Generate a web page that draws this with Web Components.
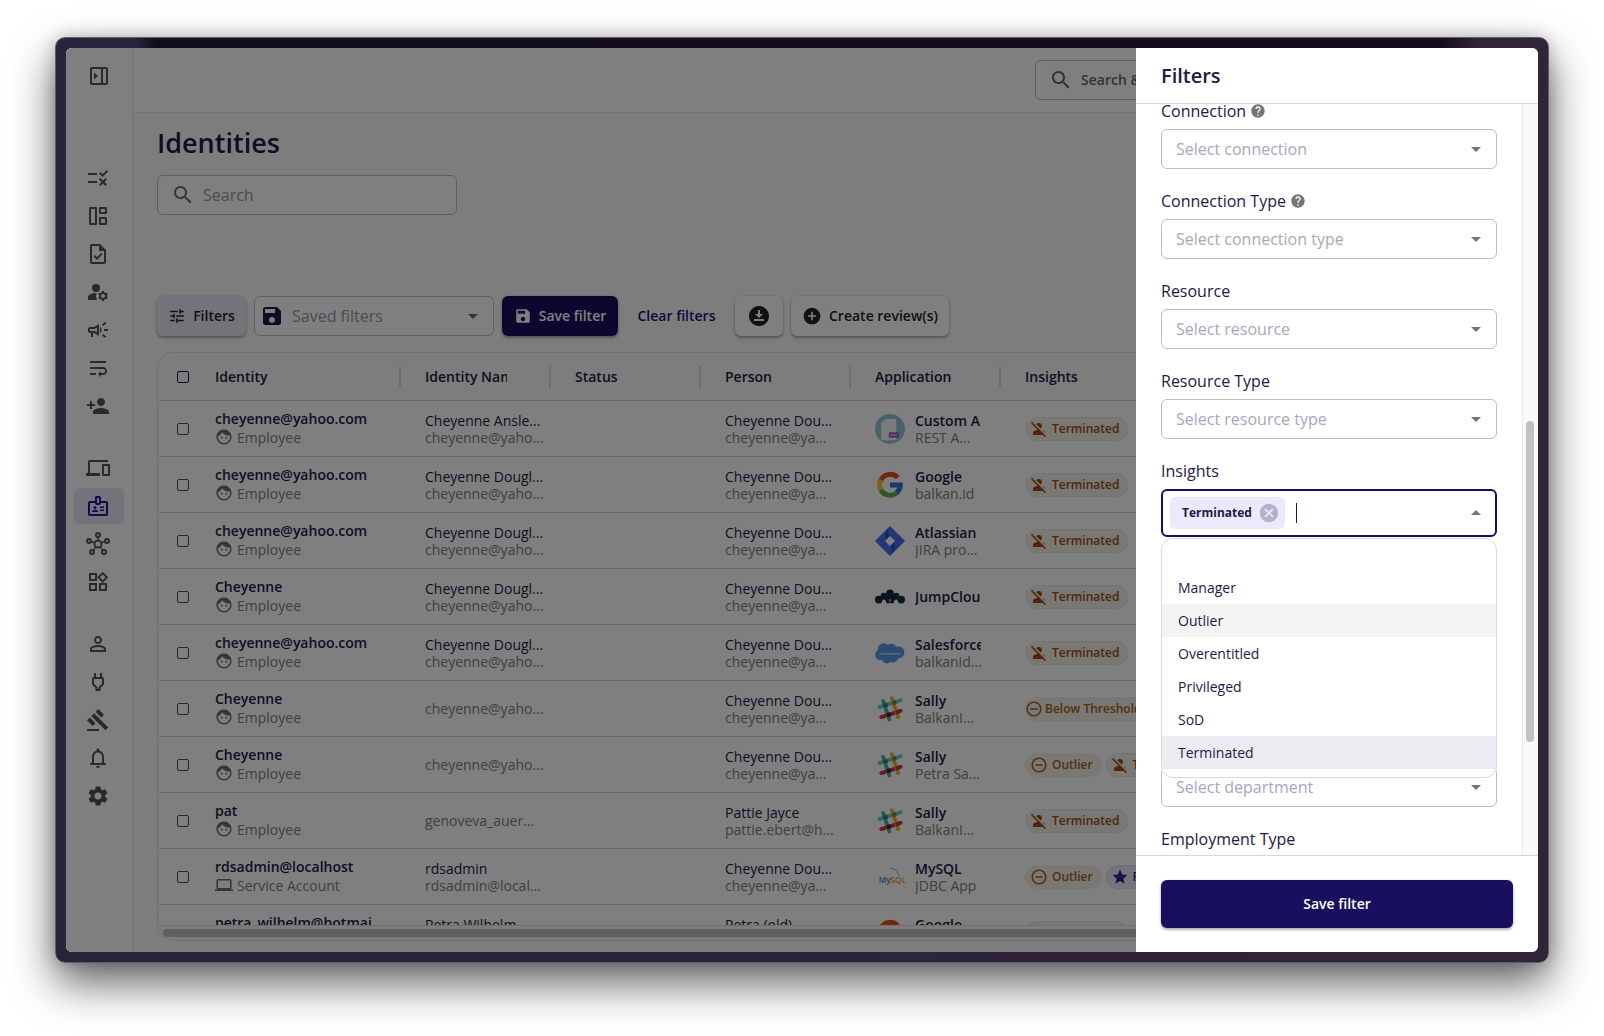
<!DOCTYPE html>
<html lang="en">
    <head>
        <meta charset="UTF-8" />
        <meta name="viewport" content="width=device-width, initial-scale=1.0" />
        <title>Identities</title>
        <style>
            :root {
                --ink: #241846;
                --primary: #190f5f;
                --muted: #808080;
                --line: #d6d6d6;
                --field-line: #bdbdbd;
                --font: "Open Sans", "Noto Sans", sans-serif;
            }

            body {
                margin: 0;
                background: #fff;
                color: var(--ink);
                font: 14px/20px var(--font);
            }
        </style>
    </head>
    <body>
        <app-window>
            <side-nav slot="nav"></side-nav>
            <global-search slot="header">Search &amp;</global-search>
            <identities-page></identities-page>
            <filter-drawer slot="drawer" heading="Filters">
                <filter-field label="Connection" placeholder="Select connection" help></filter-field>
                <filter-field label="Connection Type" placeholder="Select connection type" help></filter-field>
                <filter-field label="Resource" placeholder="Select resource"></filter-field>
                <filter-field label="Resource Type" placeholder="Select resource type"></filter-field>
                <tag-field label="Insights" value="Terminated" active="Outlier"></tag-field>
                <filter-field></filter-field>
                <filter-field></filter-field>
                <filter-field placeholder="Select department"></filter-field>
                <filter-field label="Employment Type" placeholder="Select employment type"></filter-field>
            </filter-drawer>
        </app-window>

        <script>
            const icons = {
                panel: '<path d="M19 3H5c-1.1 0-2 .9-2 2v14c0 1.1.9 2 2 2h14c1.1 0 2-.9 2-2V5c0-1.1-.9-2-2-2zM5 19V5h9v14H5zm14 0h-3V5h3v14zM7 8.5v7l4-3.5z"/>',
                rule: '<path d="M16.54 11L13 7.46l1.41-1.41 2.12 2.12 4.24-4.24 1.41 1.41L16.54 11zM11 7H2v2h9V7zm10 6.41L19.59 12 17 14.59 14.41 12 13 13.41 15.59 16 13 18.59 14.41 20 17 17.41 19.59 20 21 18.59 18.41 16 21 13.41zM11 15H2v2h9v-2z"/>',
                dashboard: '<g fill="none" stroke="currentColor" stroke-width="2" stroke-linejoin="round"><path d="M4 4h6v16H4z"/><path d="M14 4h6v5h-6zM14 14h6v6h-6z"/></g>',
                task: '<path d="M14 2H6c-1.1 0-2 .9-2 2v16c0 1.1.9 2 2 2h12c1.1 0 2-.9 2-2V8l-6-6zm4 18H6V4h7v5h5v11z"/><path d="M8.82 13.05L7.4 14.46 10.94 18l5.66-5.66-1.41-1.41-4.24 4.24z"/><path d="M13 3v6h6z"/>',
                manage: '<circle cx="10" cy="8" r="4"/><path d="M10.67 13.02c-.22-.01-.44-.02-.67-.02-2.42 0-4.68.67-6.61 1.82-.88.52-1.39 1.5-1.39 2.53V20h9.26c-.79-1.13-1.26-2.51-1.26-4 0-1.07.25-2.07.67-2.98zM20.75 16c0-.22-.03-.42-.06-.63l1.14-1.01-1-1.73-1.45.49c-.32-.27-.68-.48-1.08-.63L18 11h-2l-.3 1.49c-.4.15-.76.36-1.08.63l-1.45-.49-1 1.73 1.14 1.01c-.03.21-.06.41-.06.63s.03.42.06.63l-1.14 1.01 1 1.73 1.45-.49c.32.27.68.48 1.08.63L16 21h2l.3-1.49c.4-.15.76-.36 1.08-.63l1.45.49 1-1.73-1.14-1.01c.03-.21.06-.41.06-.63zM17 18c-1.1 0-2-.9-2-2s.9-2 2-2 2 .9 2 2-.9 2-2 2z"/>',
                campaign: '<path d="M18 11v2h4v-2h-4zM16 17.61c.96.71 2.21 1.65 3.2 2.39.4-.53.8-1.07 1.2-1.6-.99-.74-2.24-1.68-3.2-2.4-.4.54-.8 1.08-1.2 1.61zM20.4 5.6c-.4-.53-.8-1.07-1.2-1.6-.99.74-2.24 1.68-3.2 2.4.4.53.8 1.07 1.2 1.6.96-.72 2.21-1.65 3.2-2.4zM4 9c-1.1 0-2 .9-2 2v2c0 1.1.9 2 2 2h1v4h2v-4h1l5 3V6L8 9H4zm5.03 1.71L11 9.53v4.94l-1.97-1.18-.48-.29H4v-2h4.55l.48-.29zM15.5 12c0-1.33-.58-2.53-1.5-3.35v6.69c.92-.81 1.5-2.01 1.5-3.34z"/>',
                wrap: '<path d="M4 19h6v-2H4v2zM20 5H4v2h16V5zm-3 6H4v2h13.25c1.1 0 2 .9 2 2s-.9 2-2 2H15v-2l-3 3 3 3v-2h2c2.21 0 4-1.79 4-4s-1.79-4-4-4z"/>',
                personAdd: '<path d="M15 12c2.21 0 4-1.79 4-4s-1.79-4-4-4-4 1.79-4 4 1.79 4 4 4zm-9-2V7H4v3H1v2h3v3h2v-3h3v-2H6zm9 4c-2.67 0-8 1.34-8 4v2h16v-2c0-2.66-5.33-4-8-4z"/>',
                devices: '<path d="M4 6h18V4H4c-1.1 0-2 .9-2 2v11H0v3h14v-3H4V6zm19 2h-6c-.55 0-1 .45-1 1v10c0 .55.45 1 1 1h6c.55 0 1-.45 1-1V9c0-.55-.45-1-1-1zm-1 10h-4v-8h4v8z"/>',
                badge: '<path d="M20 7h-5V4c0-1.1-.9-2-2-2h-2c-1.1 0-2 .9-2 2v3H4c-1.1 0-2 .9-2 2v11c0 1.1.9 2 2 2h16c1.1 0 2-.9 2-2V9c0-1.1-.9-2-2-2zm-9-3h2v5h-2V4zm9 16H4V9h5c0 1.1.9 2 2 2h2c1.1 0 2-.9 2-2h5v11z"/><circle cx="9" cy="13.5" r="1.5"/><path d="M6 18v-.5c0-1 1.5-1.7 3-1.7s3 .7 3 1.7v.5zM14 12.5h4V14h-4zM14 15.5h4V17h-4z"/>',
                hub: '<g fill="none" stroke="currentColor" stroke-width="2"><circle cx="12" cy="12" r="3.5"/><circle cx="12" cy="3" r="2"/><circle cx="3" cy="9" r="2"/><circle cx="21" cy="9" r="2"/><circle cx="6" cy="20" r="2"/><circle cx="18" cy="20" r="2"/><path d="M12 5v3.5M5 9.5l3.7 1.2M19 9.5l-3.7 1.2M7.2 18.3l2.6-3.5M16.8 18.3l-2.6-3.5" stroke-width="1.4"/></g>',
                widgets: '<path d="M16.66 4.52l2.83 2.83-2.83 2.83-2.83-2.83 2.83-2.83M9 5v4H5V5h4m10 10v4h-4v-4h4M9 15v4H5v-4h4m7.66-13.31L11 7.34 16.66 13l5.66-5.66-5.66-5.65zM11 3H3v8h8V3zm10 10h-8v8h8v-8zm-10 0H3v8h8v-8z"/>',
                person: '<path d="M12 5.9c1.16 0 2.1.94 2.1 2.1s-.94 2.1-2.1 2.1S9.9 9.16 9.9 8s.94-2.1 2.1-2.1m0 9c2.97 0 6.1 1.46 6.1 2.1v1.1H5.9V17c0-.64 3.13-2.1 6.1-2.1M12 4C9.79 4 8 5.79 8 8s1.79 4 4 4 4-1.79 4-4-1.79-4-4-4zm0 9c-2.67 0-8 1.34-8 4v3h16v-3c0-2.66-5.33-4-8-4z"/>',
                power: '<path d="M16 9v4.66l-3.5 3.51V19h-1v-1.83L8 13.65V9h8m0-6h-2v4h-4V3H8v4c-1.1 0-2 .9-2 2v5.5L9.5 18v3h5v-3l3.5-3.51V9c0-1.1-.9-2-2-2V3z"/>',
                gavel: '<path d="M1 21h12v2H1v-2zM5.24 8.07l2.83-2.83 14.14 14.14-2.83 2.83L5.24 8.07zM12.32 1l5.66 5.66-2.83 2.83-5.66-5.66L12.32 1zM3.82 9.48l5.66 5.66-2.83 2.83-5.66-5.66 2.83-2.83z"/>',
                bell: '<path d="M12 22c1.1 0 2-.9 2-2h-4c0 1.1.9 2 2 2zm6-6v-5c0-3.07-1.63-5.64-4.5-6.32V4c0-.83-.67-1.5-1.5-1.5s-1.5.67-1.5 1.5v.68C7.64 5.36 6 7.92 6 11v5l-2 2v1h16v-1l-2-2zm-2 1H8v-6c0-2.48 1.51-4.5 4-4.5s4 2.02 4 4.5v6z"/>',
                settings: '<path d="M19.14 12.94c.04-.3.06-.61.06-.94 0-.32-.02-.64-.07-.94l2.03-1.58c.18-.14.23-.41.12-.61l-1.92-3.32c-.12-.22-.37-.29-.59-.22l-2.39.96c-.5-.38-1.03-.7-1.62-.94l-.36-2.54c-.04-.24-.24-.41-.48-.41h-3.84c-.24 0-.43.17-.47.41l-.36 2.54c-.59.24-1.13.57-1.62.94l-2.39-.96c-.22-.08-.47 0-.59.22L2.74 8.87c-.12.21-.08.47.12.61l2.03 1.58c-.05.3-.09.63-.09.94s.02.64.07.94l-2.03 1.58c-.18.14-.23.41-.12.61l1.92 3.32c.12.22.37.29.59.22l2.39-.96c.5.38 1.03.7 1.62.94l.36 2.54c.05.24.24.41.48.41h3.84c.24 0 .44-.17.47-.41l.36-2.54c.59-.24 1.13-.56 1.62-.94l2.39.96c.22.08.47 0 .59-.22l1.92-3.32c.12-.22.07-.47-.12-.61l-2.01-1.58zM12 15.6c-1.98 0-3.6-1.62-3.6-3.6s1.62-3.6 3.6-3.6 3.6 1.62 3.6 3.6-1.62 3.6-3.6 3.6z"/>',
                search: '<path d="M15.5 14h-.79l-.28-.27C15.41 12.59 16 11.11 16 9.5 16 5.91 13.09 3 9.5 3S3 5.91 3 9.5 5.91 16 9.5 16c1.61 0 3.09-.59 4.23-1.57l.27.28v.79l5 4.99L20.49 19l-4.99-5zm-6 0C7.01 14 5 11.99 5 9.5S7.01 5 9.5 5 14 7.01 14 9.5 11.99 14 9.5 14z"/>',
                tune: '<path d="M3 17v2h6v-2H3zM3 5v2h10V5H3zm10 16v-2h8v-2h-8v-2h-2v6h2zM7 9v2H3v2h4v2h2V9H7zm14 4v-2H11v2h10zm-6-4h2V7h4V5h-4V3h-2v6z"/>',
                save: '<path d="M17 3H5c-1.11 0-2 .9-2 2v14c0 1.1.89 2 2 2h14c1.1 0 2-.9 2-2V7l-4-4zm-5 16c-1.66 0-3-1.34-3-3s1.34-3 3-3 3 1.34 3 3-1.34 3-3 3zm3-10H5V5h10v4z"/>',
                download: '<path d="M12 2C6.49 2 2 6.49 2 12s4.49 10 10 10 10-4.49 10-10S17.51 2 12 2zm-1 8V6h2v4h3l-4 4-4-4h3zm6 7H7v-2h10v2z"/>',
                add: '<path d="M12 2C6.48 2 2 6.48 2 12s4.48 10 10 10 10-4.48 10-10S17.52 2 12 2zm5 11h-4v4h-2v-4H7v-2h4V7h2v4h4v2z"/>',
                face: '<path d="M9 11.75c-.69 0-1.25.56-1.25 1.25s.56 1.25 1.25 1.25 1.25-.56 1.25-1.25-.56-1.25-1.25-1.25zm6 0c-.69 0-1.25.56-1.25 1.25s.56 1.25 1.25 1.25 1.25-.56 1.25-1.25-.56-1.25-1.25-1.25zM12 2C6.48 2 2 6.48 2 12s4.48 10 10 10 10-4.48 10-10S17.52 2 12 2zm0 18c-4.41 0-8-3.59-8-8 0-.29.02-.58.05-.86 2.36-1.05 4.23-2.98 5.21-5.37C11.07 8.33 14.05 10 17.42 10c.78 0 1.53-.09 2.25-.26.21.71.33 1.47.33 2.26 0 4.41-3.59 8-8 8z"/>',
                laptop: '<path d="M20 18c1.1 0 2-.9 2-2V6c0-1.1-.9-2-2-2H4c-1.1 0-2 .9-2 2v10c0 1.1.9 2 2 2H0v2h24v-2h-4zM4 6h16v10H4V6z"/>',
                personOff: '<path d="M8.65 5.82C9.36 4.72 10.6 4 12 4c2.21 0 4 1.79 4 4 0 1.4-.72 2.64-1.82 3.35L8.65 5.82zM20 17.17c-.02-1.1-.63-2.11-1.61-2.62-.54-.28-1.13-.54-1.77-.76L20 17.17zm1.19 4.02L2.81 2.81 1.39 4.22l8.89 8.89c-1.81.23-3.39.79-4.67 1.45-1 .51-1.61 1.54-1.61 2.66V20h13.17l2.61 2.61 1.41-1.42z"/>',
                minus: '<path d="M7 11v2h10v-2H7zm5-9C6.48 2 2 6.48 2 12s4.48 10 10 10 10-4.48 10-10S17.52 2 12 2zm0 18c-4.41 0-8-3.59-8-8s3.59-8 8-8 8 3.59 8 8-3.59 8-8 8z"/>',
                star: '<path d="M12 17.27L18.18 21l-1.64-7.03L22 9.24l-7.19-.61L12 2 9.19 8.63 2 9.24l5.46 4.73L5.82 21z"/>',
                help: '<path d="M12 2C6.48 2 2 6.48 2 12s4.48 10 10 10 10-4.48 10-10S17.52 2 12 2zm1 17h-2v-2h2v2zm2.07-7.75l-.9.92C13.45 12.9 13 13.5 13 15h-2v-.5c0-1.1.45-2.1 1.17-2.83l1.24-1.26c.37-.36.59-.86.59-1.41 0-1.1-.9-2-2-2s-2 .9-2 2H8c0-2.21 1.79-4 4-4s4 1.79 4 4c0 .88-.36 1.68-.93 2.25z"/>',
                cancel: '<path d="M12 2C6.47 2 2 6.47 2 12s4.47 10 10 10 10-4.47 10-10S17.53 2 12 2zm5 13.59L15.59 17 12 13.41 8.41 17 7 15.59 10.59 12 7 8.41 8.41 7 12 10.59 15.59 7 17 8.41 13.41 12 17 15.59z"/>',
                down: '<path d="M7 10l5 5 5-5z"/>',
                up: '<path d="M7 14l5-5 5 5z"/>',

                // application logos
                custom: '<circle cx="12" cy="12" r="12" fill="#8fc4d2"/><path d="M8 4h9v17H5V7z" fill="#f7f7f7"/><path d="M8 4v3H5z" fill="#cfdfe4"/><rect x="11" y="14.5" width="8" height="4.5" rx=".5" fill="#a35dc0"/><path d="M12.5 16.8h5" stroke="#e0c6ea" stroke-width="1"/>',
                google: '<g fill="none" stroke-width="4"><path d="M18.2 6.1A8.3 8.3 0 0 0 4.7 8" stroke="#ea4d1f"/><path d="M4.7 8a8.3 8.3 0 0 0 0 8" stroke="#f2c230"/><path d="M4.7 16a8.3 8.3 0 0 0 12.6 2.3" stroke="#5fae45"/><path d="M17.3 18.3A8.3 8.3 0 0 0 20.2 12H12" stroke="#3d6fe0"/></g>',
                atlassian: '<path d="M12 0l12 12-12 12L0 12z" fill="#4a6cf0"/><path d="M12 1c-3 3-2 5 0 7l-3 3c-2-4-1-7 3-10zM12 23c3-3 2-5 0-7l3-3c2 4 1 7-3 10z" fill="#2c46c0"/><path d="M12 8l4 4-4 4-4-4z" fill="#fff"/>',
                jumpcloud: '<g fill="#14293d"><circle cx="12" cy="9" r="3"/><circle cx="7" cy="11" r="2.5"/><circle cx="17" cy="11" r="2.5"/><circle cx="3" cy="14" r="3"/><circle cx="21" cy="14" r="3"/><path d="M1 17c1-4 3-5 6-5s5 2 5 5c0-3 2-5 5-5s5 1 6 5h-4c0-2-1-3-2-3s-2 1-2 3H9c0-2-1-3-2-3s-2 1-2 3z"/><path d="M8 10h8v4h-8z"/></g>',
                salesforce: '<g fill="#5a96e0"><circle cx="7" cy="9" r="4.8"/><circle cx="13" cy="8.5" r="4"/><circle cx="18.5" cy="11.5" r="5"/><circle cx="4.5" cy="13.5" r="4.3"/><circle cx="9.5" cy="16" r="4.3"/><circle cx="14.5" cy="15.500" r="4"/></g><path d="M3.5 12.5h17" stroke="#dce8f8" stroke-width="1.2" stroke-dasharray="1.5 .5"/>',
                slack: '<g stroke-width="3" stroke-linecap="round"><path d="M3.500 10.500l17-5.500" stroke="#6fc7e0"/><path d="M5 18.500l15.500-5" stroke="#d8285c"/><path d="M6.500 5.500l5 15" stroke="#48b48c"/><path d="M13.500 3.500l5 15" stroke="#e8b22c"/></g><path d="M6.500 8l3-1 1 3-3 1z" fill="#2f7f74"/><path d="M13.500 5.800l3-1 1 3-3 1z" fill="#5d8f3a"/><path d="M9 15.500l3-1 1 3-3 1z" fill="#27242f"/><path d="M16 13.300l3-1 1 3-3 1z" fill="#b8421c"/>',
                mysql: '<text x="3" y="17" font-family="Open Sans" font-size="6.5" font-weight="600" fill="#4f7ea0">My<tspan fill="#e8962c">SQL</tspan></text><path d="M12.5 5c3 0 5 2 5.500 4l1.500 2" fill="none" stroke="#7fa4bd" stroke-width=".7"/>',
            };

            // Every element below renders one static string into an open root.
            class BaseElement extends HTMLElement {
                connectedCallback() {
                    const shadow = this.attachShadow({ mode: "open" });
                    shadow.innerHTML = `<style>* { box-sizing: border-box; }</style>${this.render()}`;
                }
            }

            class UiIcon extends BaseElement {
                render() {
                    const size = this.getAttribute("size") || 24;
                    return `
                        <style>
                            :host { display: inline-flex; flex: none; }
                            svg { display: block; fill: currentColor; }
                        </style>
                        <svg width="${size}" height="${size}" viewBox="0 0 24 24" aria-hidden="true">${icons[this.getAttribute("name")]}</svg>`;
                }
            }

            class AppWindow extends BaseElement {
                render() {
                    return `
                        <style>
                            :host {
                                display: flex;
                                box-sizing: border-box;
                                height: 100vh;
                                padding: 37px 55px 73px;
                            }
                            .frame {
                                flex: 1;
                                display: flex;
                                min-width: 0;
                                padding: 10px;
                                border: 1px solid #605d6b;
                                border-radius: 10px;
                                background:
                                    linear-gradient(90deg, transparent 80px, #110c20 100px, #140c1c calc(100% - 110px), transparent calc(100% - 70px)) top / 100% 10px no-repeat,
                                    linear-gradient(90deg, #28253a, #302438);
                                box-shadow: 0 20px 44px rgba(0, 0, 0, 0.62), 0 0 16px rgba(0, 0, 0, 0.2);
                            }
                            .screen {
                                position: relative;
                                flex: 1;
                                display: flex;
                                min-width: 0;
                                overflow: hidden;
                                border-radius: 6px;
                                background: #fafafa;
                            }
                            .column {
                                flex: 1;
                                display: flex;
                                flex-direction: column;
                                min-width: 0;
                            }
                            header {
                                display: flex;
                                justify-content: flex-end;
                                padding: 12px 24px;
                                border-bottom: 1px solid #e6e6e6;
                                background: #fff;
                            }
                            .backdrop {
                                position: absolute;
                                inset: 0;
                                background: rgba(0, 0, 0, 0.5);
                            }
                        </style>
                        <div class="frame">
                            <div class="screen">
                                <slot name="nav"></slot>
                                <div class="column">
                                    <header><slot name="header"></slot></header>
                                    <slot></slot>
                                </div>
                                <div class="backdrop"></div>
                                <slot name="drawer"></slot>
                            </div>
                        </div>`;
                }
            }

            class SideNav extends BaseElement {
                render() {
                    const groups = [
                        ["rule", "dashboard", "task", "manage", "campaign", "wrap", "personAdd"],
                        ["devices", "badge", "hub", "widgets"],
                        ["person", "power", "gavel", "bell", "settings"],
                    ];
                    const link = (name) =>
                        `<a href="#${name}" aria-label="${name}" ${name === "badge" ? 'class="active"' : ""}><ui-icon name="${name}"></ui-icon></a>`;
                    return `
                        <style>
                            :host {
                                display: flex;
                                flex-direction: column;
                                flex: none;
                                width: 67px;
                                box-sizing: border-box;
                                padding: 16px 8px;
                                border-right: 1px solid #e6e6e6;
                                background: #fff;
                                color: #55535c;
                            }
                            button {
                                display: flex;
                                justify-content: center;
                                margin: 0 0 72px;
                                padding: 0;
                                border: 0;
                                background: none;
                                color: inherit;
                            }
                            nav { display: flex; flex-direction: column; gap: 26px; }
                            div { display: flex; flex-direction: column; gap: 2px; }
                            a {
                                display: flex;
                                align-items: center;
                                height: 36px;
                                padding: 0 12px;
                                border-radius: 5px;
                                color: inherit;
                            }
                            .active { background: #e8e6f4; color: #2210a0; }
                        </style>
                        <button type="button" aria-label="Expand menu"><ui-icon name="panel"></ui-icon></button>
                        <nav>${groups.map((group) => `<div>${group.map(link).join("")}</div>`).join("")}</nav>`;
                }
            }

            class GlobalSearch extends BaseElement {
                render() {
                    return `
                        <style>
                            :host { display: flex; flex: 0 1 479px; }
                            button {
                                flex: 1;
                                display: flex;
                                align-items: center;
                                gap: 8px;
                                height: 40px;
                                padding: 0 13px;
                                border: 1px solid var(--field-line);
                                border-radius: 6px;
                                background: #fff;
                                color: #666370;
                                font: 600 14px/20px var(--font);
                            }
                        </style>
                        <button type="button"><ui-icon name="search"></ui-icon><slot></slot></button>`;
                }
            }

            class UiButton extends BaseElement {
                render() {
                    const icon = this.getAttribute("icon");
                    return `
                        <style>
                            :host { display: inline-flex; }
                            button {
                                flex: 1;
                                display: flex;
                                align-items: center;
                                justify-content: center;
                                gap: 7px;
                                min-width: 0;
                                height: 40px;
                                padding: 0 10px;
                                border: 0;
                                border-radius: 6px;
                                background: #fff;
                                color: #222;
                                font: 600 14px/20px var(--font);
                                white-space: nowrap;
                                box-shadow: 0 2px 3px rgba(0, 0, 0, 0.3), 0 0 2px rgba(0, 0, 0, 0.15);
                            }
                            :host([kind="primary"]) button { background: var(--primary); color: #fff; }
                            :host([kind="soft"]) button { background: #e8e6f4; }
                            :host([kind="text"]) button { background: none; color: #21127c; box-shadow: none; }
                            :host([size="large"]) button { height: 48px; }
                        </style>
                        <button type="button" aria-label="${this.getAttribute("label") || this.textContent}">
                            ${icon ? `<ui-icon name="${icon}" size="${this.getAttribute("icon-size") || 20}"></ui-icon>` : ""}<slot></slot>
                        </button>`;
                }
            }

            class IdentitiesPage extends BaseElement {
                render() {
                    return `
                        <style>
                            :host {
                                flex: 1;
                                display: flex;
                                flex-direction: column;
                                min-height: 0;
                                padding: 10px 24px 11px;
                            }
                            h1 { margin: 0 0 12px; font-size: 27px; line-height: 40px; font-weight: 600; }
                            .search {
                                display: flex;
                                align-items: center;
                                gap: 8px;
                                width: 300px;
                                height: 40px;
                                padding: 0 13px;
                                border: 1px solid var(--field-line);
                                border-radius: 6px;
                                background: #fff;
                                color: #6b6b6b;
                            }
                            .search input {
                                flex: 1;
                                min-width: 0;
                                padding: 0;
                                border: 0;
                                background: none;
                                font: 16px/24px var(--font);
                            }
                            input::placeholder { color: #9a96aa; opacity: 1; }
                            .toolbar { display: flex; gap: 8px; margin: 81px 0 16px; }
                            .filters { width: 89px; }
                            .saved {
                                display: flex;
                                align-items: center;
                                gap: 8px;
                                width: 240px;
                                height: 40px;
                                padding: 0 8px 0 5px;
                                border: 1px solid var(--field-line);
                                border-radius: 6px;
                                background: #fff;
                            }
                            .saved select {
                                flex: 1;
                                min-width: 0;
                                padding: 0;
                                border: 0;
                                appearance: none;
                                background: none;
                                color: #9a96aa;
                                font: 16px/24px var(--font);
                            }
                            .saved ui-icon:last-child { color: #666; }
                            .save { width: 116px; }
                            .clear { width: 101px; }
                            .download { width: 48px; }
                            .review { width: 158px; }
                        </style>
                        <h1>Identities</h1>
                        <label class="search"><ui-icon name="search"></ui-icon><input type="text" placeholder="Search" aria-label="Search identities" /></label>
                        <div class="toolbar">
                            <ui-button class="filters" kind="soft" icon="tune" icon-size="18">Filters</ui-button>
                            <label class="saved">
                                <ui-icon name="save"></ui-icon>
                                <select aria-label="Saved filters"><option>Saved filters</option></select>
                                <ui-icon name="down"></ui-icon>
                            </label>
                            <ui-button class="save" kind="primary" icon="save" icon-size="18">Save filter</ui-button>
                            <ui-button class="clear" kind="text">Clear filters</ui-button>
                            <ui-button class="download" icon="download" icon-size="24" label="Download"></ui-button>
                            <ui-button class="review" icon="add">Create review(s)</ui-button>
                        </div>
                        <identity-table></identity-table>`;
                }
            }

            class InsightChip extends BaseElement {
                render() {
                    const kind = this.getAttribute("kind");
                    const icon = { off: "personOff", minus: "minus", low: "minus", star: "star" }[kind];
                    return `
                        <style>
                            :host {
                                display: inline-flex;
                                align-items: center;
                                flex: none;
                                gap: 4px;
                                box-sizing: border-box;
                                height: 24px;
                                padding: 0 8px 0 4px;
                                border: 1px solid #eae6dc;
                                border-radius: 12px;
                                background: #f3f0e9;
                                color: #a04a14;
                                font: 600 12px/16px var(--font);
                                white-space: nowrap;
                            }
                            :host([kind="minus"]), :host([kind="low"]) { color: #a86018; border-color: #f3f0e9; }
                            :host([kind="low"]) { padding-left: 0; gap: 2px; border-left: 0; }
                            :host([kind="star"]) { color: #32208c; background: #ebe9f8; border-color: #dcdaf0; }
                        </style>
                        <ui-icon name="${icon}" size="18"></ui-icon><slot></slot>`;
                }
            }

            const rows = [
                ["cheyenne@yahoo.com", "Employee", "Cheyenne Ansle...", "cheyenne@yaho...", "Cheyenne Dou...", "cheyenne@ya...", "custom", "Custom A", "REST A...", [["off", "Terminated"]]],
                ["cheyenne@yahoo.com", "Employee", "Cheyenne Dougl...", "cheyenne@yaho...", "Cheyenne Dou...", "cheyenne@ya...", "google", "Google", "balkan.id", [["off", "Terminated"]]],
                ["cheyenne@yahoo.com", "Employee", "Cheyenne Dougl...", "cheyenne@yaho...", "Cheyenne Dou...", "cheyenne@ya...", "atlassian", "Atlassian", "JIRA pro...", [["off", "Terminated"]]],
                ["Cheyenne", "Employee", "Cheyenne Dougl...", "cheyenne@yaho...", "Cheyenne Dou...", "cheyenne@ya...", "jumpcloud", "JumpCloud", "", [["off", "Terminated"]]],
                ["cheyenne@yahoo.com", "Employee", "Cheyenne Dougl...", "cheyenne@yaho...", "Cheyenne Dou...", "cheyenne@ya...", "salesforce", "Salesforce", "balkanid...", [["off", "Terminated"]]],
                ["Cheyenne", "Employee", "", "cheyenne@yaho...", "Cheyenne Dou...", "cheyenne@ya...", "slack", "Sally", "BalkanI...", [["low", "Below Threshold"]]],
                ["Cheyenne", "Employee", "", "cheyenne@yaho...", "Cheyenne Dou...", "cheyenne@ya...", "slack", "Sally", "Petra Sa...", [["minus", "Outlier"], ["off", "Terminated"]]],
                ["pat", "Employee", "", "genoveva_auer...", "Pattie Jayce", "pattie.ebert@h...", "slack", "Sally", "BalkanI...", [["off", "Terminated"]]],
                ["rdsadmin@localhost", "Service Account", "rdsadmin", "rdsadmin@local...", "Cheyenne Dou...", "cheyenne@ya...", "mysql", "MySQL", "JDBC App", [["minus", "Outlier"], ["star", "Privileged"]]],
                ["petra_wilhelm@hotmai", "Employee", "Petra Wilhelm", "petra_wilhelm...", "Petra (old)", "petra@hotmai...", "google", "Google", "balkan.id", [["off", "Terminated"]]],
            ];

            class IdentityTable extends BaseElement {
                row([name, kind, full, mail, person, personMail, logo, app, appInfo, chips]) {
                    const line = (cls, text) => (text ? `<div class="${cls}">${text}</div>` : "");
                    return `
                        <tr>
                            <td class="tick"><input type="checkbox" aria-label="Select ${name}" /></td>
                            <td class="who">
                                <div class="name">${name}</div>
                                <div class="kind"><ui-icon name="${kind === "Employee" ? "face" : "laptop"}" size="18"></ui-icon><span class="sub">${kind}</span></div>
                            </td>
                            <td>${line("full", full)}${line("sub", mail)}</td>
                            <td></td>
                            <td>${line("full", person)}${line("sub", personMail)}</td>
                            <td><div class="app"><ui-icon name="${logo}" size="30"></ui-icon><div class="clip">${line("name", app)}${line("sub", appInfo)}</div></div></td>
                            <td><div class="chips">${chips.map(([k, text]) => `<insight-chip kind="${k}">${text}</insight-chip>`).join("")}</div></td>
                        </tr>`;
                }
                render() {
                    const heads = ["Identity", "Identity Name", "Status", "Person", "Application", "Insights"];
                    return `
                        <style>
                            :host {
                                flex: 1;
                                display: flex;
                                flex-direction: column;
                                min-height: 0;
                                padding: 0 1px;
                                overflow: hidden;
                                border: 1px solid #e2e2e2;
                                border-radius: 16px;
                                box-sizing: border-box;
                            }
                            .body { flex: 1; min-height: 0; overflow: hidden; }
                            table { width: 100%; table-layout: fixed; border-collapse: separate; border-spacing: 0; }
                            col { width: 150px; }
                            col.tick { width: 32px; }
                            col.who { width: 210px; }
                            col.rest { width: auto; }
                            th, td {
                                padding: 0 0 0 24px;
                                border-bottom: 1px solid var(--line);
                                text-align: left;
                                vertical-align: middle;
                                line-height: 17px;
                                white-space: nowrap;
                            }
                            th { height: 48px; font-weight: 600; }
                            td { height: 56px; background: #fff; }
                            th.tick, td.tick { padding: 0 0 0 18px; }
                            th div {
                                padding-right: 42px;
                                border-right: 2px solid #dcdcdc;
                                height: 22px;
                                line-height: 22px;
                            }
                            th:last-child div { border: 0; }
                            th span { display: block; overflow: hidden; }
                            input {
                                display: block;
                                width: 12px;
                                height: 12px;
                                margin: 0;
                                appearance: none;
                                border: 1px solid #4d4d4d;
                                border-radius: 2px;
                            }
                            th input { border-color: var(--ink); }
                            .name { font-weight: 600; }
                            .sub { color: var(--muted); }
                            .kind { display: flex; align-items: center; gap: 4px; height: 20px; color: #6b6b6b; }
                            .app { display: flex; align-items: center; gap: 10px; }
                            .clip { width: 66px; overflow: hidden; }
                            .chips { display: flex; gap: 4px; }
                            .scroll { padding: 3px 4px; height: 15px; border-top: 1px solid #dedede; }
                            .thumb { height: 8px; border-radius: 4px; background: #c1c1c1; }
                        </style>
                        <div class="body">
                            <table>
                                <colgroup><col class="tick" /><col class="who" /><col /><col /><col /><col /><col class="rest" /></colgroup>
                                <thead>
                                    <tr>
                                        <th class="tick"><input type="checkbox" aria-label="Select all" /></th>
                                        ${heads.map((head) => `<th><div><span>${head}</span></div></th>`).join("")}
                                    </tr>
                                </thead>
                                <tbody>${rows.map((row) => this.row(row)).join("")}</tbody>
                            </table>
                        </div>
                        <div class="scroll"><div class="thumb"></div></div>`;
                }
            }

            class FilterDrawer extends BaseElement {
                render() {
                    return `
                        <style>
                            :host {
                                position: absolute;
                                top: 0;
                                right: 0;
                                bottom: 0;
                                width: 402px;
                                display: flex;
                                flex-direction: column;
                                box-sizing: border-box;
                                background: #fff;
                            }
                            h2 {
                                margin: 0;
                                padding: 14px 25px 13px;
                                border-bottom: 1px solid var(--line);
                                font-size: 20px;
                                line-height: 28px;
                                font-weight: 600;
                            }
                            .scroller { flex: 1; display: flex; min-height: 0; overflow: hidden; }
                            .fields {
                                flex: 1;
                                display: flex;
                                flex-direction: column;
                                gap: 20px;
                                min-width: 0;
                                margin-top: -5px;
                                padding: 0 25px;
                            }
                            .track {
                                flex: none;
                                width: 16px;
                                padding: 317px 3px 0;
                                border-left: 1px solid #e8e8e8;
                                background: #fafafa;
                            }
                            .thumb { width: 8px; height: 321px; border-radius: 4px; background: #c1c1c1; }
                            footer { display: flex; padding: 24px 25px; border-top: 1px solid var(--line); }
                            ui-button { flex: 1; }
                        </style>
                        <h2>${this.getAttribute("heading")}</h2>
                        <div class="scroller">
                            <div class="fields"><slot></slot></div>
                            <div class="track"><div class="thumb"></div></div>
                        </div>
                        <footer><ui-button kind="primary" size="large">Save filter</ui-button></footer>`;
                }
            }

            const fieldStyle = `
                :host { display: flex; flex-direction: column; flex: none; gap: 6px; position: relative; }
                .label { display: flex; align-items: center; gap: 4px; height: 24px; font-size: 16px; line-height: 24px; }
                .label ui-icon { color: #757575; }
                .box {
                    display: flex;
                    align-items: center;
                    height: 40px;
                    padding: 0 8px 0 14px;
                    border: 1px solid var(--field-line);
                    border-radius: 6px;
                    background: #fff;
                }
                .box > ui-icon { color: #757575; }
            `;

            class FilterField extends BaseElement {
                render() {
                    return `
                        <style>
                            ${fieldStyle}
                            select {
                                flex: 1;
                                min-width: 0;
                                padding: 0;
                                border: 0;
                                appearance: none;
                                background: none;
                                color: #aaa6ba;
                                font: 16px/24px var(--font);
                            }
                        </style>
                        <label class="label" for="control">${this.getAttribute("label") || ""}${this.hasAttribute("help") ? '<ui-icon name="help" size="16"></ui-icon>' : ""}</label>
                        <div class="box">
                            <select id="control"><option>${this.getAttribute("placeholder") || ""}</option></select>
                            <ui-icon name="down"></ui-icon>
                        </div>`;
                }
            }

            class TagField extends BaseElement {
                render() {
                    const value = this.getAttribute("value");
                    const active = this.getAttribute("active");
                    const options = ["Manager", "Outlier", "Overentitled", "Privileged", "SoD", "Terminated"];
                    const state = (name) => (name === value ? "selected" : name === active ? "hover" : "");
                    return `
                        <style>
                            ${fieldStyle}
                            .box { height: 48px; padding: 0 7px; border: 2px solid var(--primary); }
                            .tag {
                                display: flex;
                                align-items: center;
                                gap: 6px;
                                height: 32px;
                                padding: 0 5px 0 12px;
                                border-radius: 5px;
                                background: #ece9fd;
                                font: 700 12px/20px var(--font);
                            }
                            .tag button { display: flex; padding: 0; border: 0; background: none; color: #b5b1c9; }
                            .caret { width: 1px; height: 20px; margin-left: 11px; background: var(--ink); }
                            input { flex: 1; min-width: 0; padding: 0; border: 0; outline: 0; background: none; font: 16px/24px var(--font); }
                            ul {
                                position: absolute;
                                z-index: 1;
                                top: 79px;
                                left: 0;
                                right: 0;
                                margin: 0;
                                padding: 32px 0 8px;
                                border: 1px solid #d9d9de;
                                border-radius: 12px;
                                background: #fff;
                                list-style: none;
                            }
                            li { padding: 7px 16px 6px; }
                            .hover { background: #f4f4f4; }
                            .selected { background: #ebecf2; }
                        </style>
                        <label class="label" for="control">${this.getAttribute("label")}</label>
                        <div class="box">
                            <span class="tag">${value}<button type="button" aria-label="Remove"><ui-icon name="cancel" size="22"></ui-icon></button></span>
                            <span class="caret"></span>
                            <input id="control" type="text" role="combobox" aria-expanded="true" />
                            <ui-icon name="up"></ui-icon>
                        </div>
                        <ul role="listbox">${options.map((name) => `<li role="option" class="${state(name)}">${name}</li>`).join("")}</ul>`;
                }
            }

            customElements.define("ui-icon", UiIcon);
            customElements.define("ui-button", UiButton);
            customElements.define("app-window", AppWindow);
            customElements.define("side-nav", SideNav);
            customElements.define("global-search", GlobalSearch);
            customElements.define("insight-chip", InsightChip);
            customElements.define("identity-table", IdentityTable);
            customElements.define("identities-page", IdentitiesPage);
            customElements.define("filter-field", FilterField);
            customElements.define("tag-field", TagField);
            customElements.define("filter-drawer", FilterDrawer);
        </script>
    </body>
</html>
